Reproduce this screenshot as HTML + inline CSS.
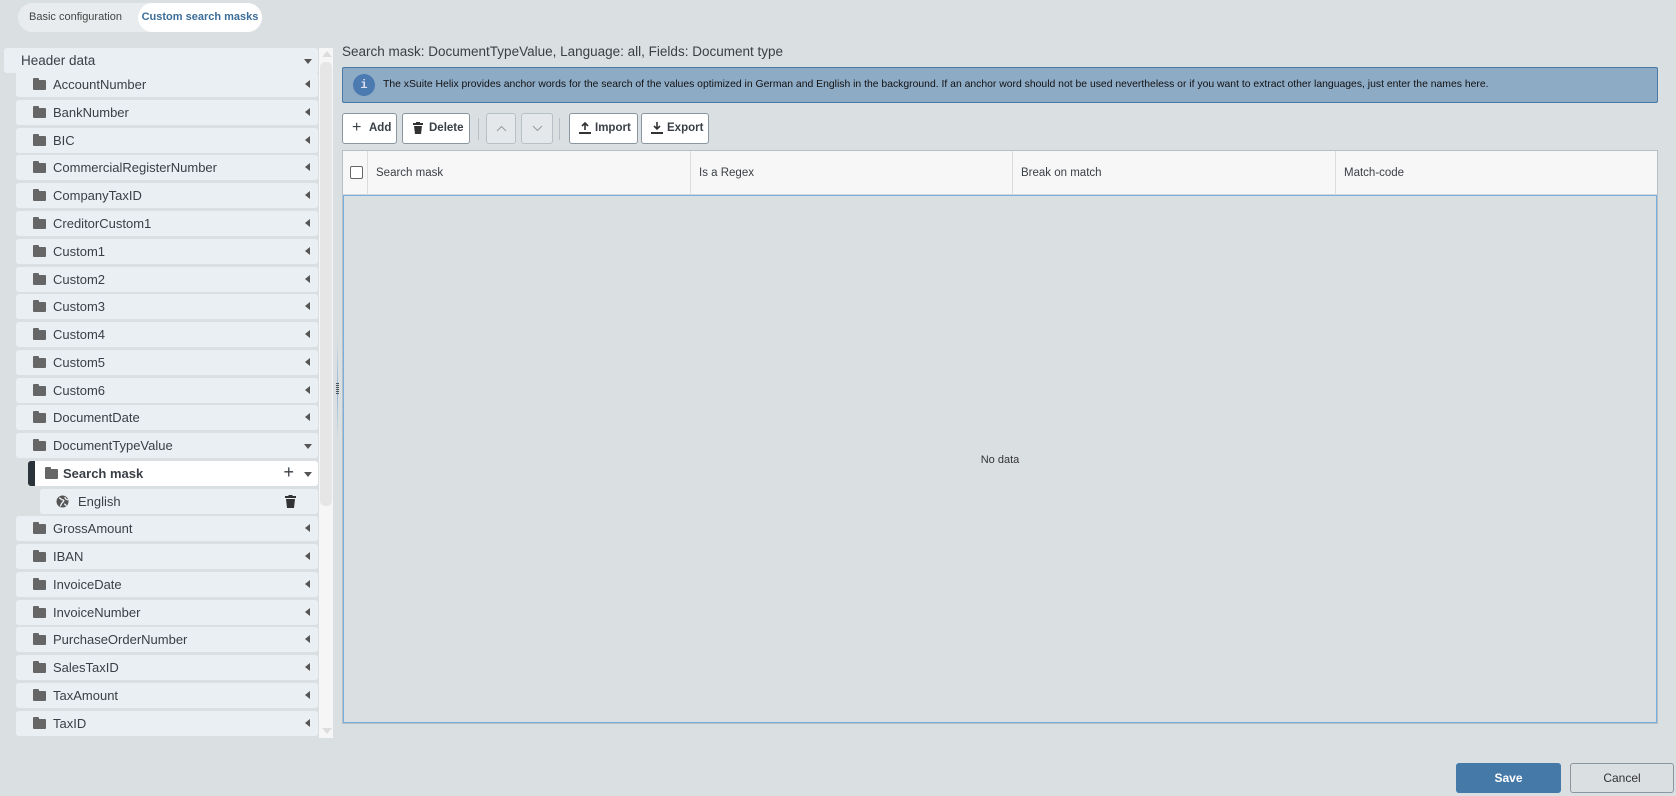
<!DOCTYPE html>
<html><head><meta charset="utf-8"><style>
*{box-sizing:border-box;margin:0;padding:0}
body{width:1676px;height:796px;background:#dadfe2;font-family:"Liberation Sans",sans-serif;position:relative;overflow:hidden;color:#333}
.abs{position:absolute}
.tabs{left:18px;top:3px;width:243px;height:29px;background:#e9ecee;border-radius:15px}
.tab{position:absolute;top:0;height:29px;line-height:29px;font-size:11px}
.row{position:absolute;left:16px;width:302px;height:25px;background:#eaeff3;border-radius:3px;font-size:13px;line-height:25px;color:#3a3f45}
.row .t{position:absolute;left:37px}
.fold{position:absolute;left:17px;top:8px;width:13px;height:10px;background:#666;border-radius:1px}
.fold:before{content:"";position:absolute;left:0;top:-2px;width:6px;height:3px;background:#666;border-radius:1px 1px 0 0}
.arr{position:absolute;right:8px;top:8px;width:0;height:0;border-top:4.5px solid transparent;border-bottom:4.5px solid transparent;border-right:5px solid #555}
.arrd{position:absolute;right:6px;top:11px;width:0;height:0;border-left:4.5px solid transparent;border-right:4.5px solid transparent;border-top:5px solid #555}
.btn{position:absolute;top:113px;height:31px;background:#fff;border:1px solid #8a96a0;border-radius:3px;font-size:11.5px;font-weight:bold;color:#3a3f45;line-height:29px}
.btn.dis{background:#e4e8eb;border-color:#b8c0c6}
.th{position:absolute;top:0;height:44px;line-height:44px;font-size:11.5px;color:#3a3f45;border-left:1px solid #dcdcdc;padding-left:8px}
</style></head><body>
<div class="abs tabs"><div class="tab" style="left:11px;color:#444">Basic configuration</div>
<div class="tab" style="left:120px;width:124px;background:#fff;border-radius:15px;text-align:center;font-weight:bold;color:#3d6d99">Custom search masks</div></div>

<div class="abs" style="left:319px;top:48px;width:14px;height:690px;background:#f6f6f6"></div>
<div class="abs" style="left:320px;top:62px;width:12px;height:444px;background:#e6e6e6;border-radius:5px"></div>
<div class="abs" style="left:322px;top:51px;border-left:5px solid transparent;border-right:5px solid transparent;border-bottom:6px solid #ddd"></div>
<div class="abs" style="left:322px;top:728px;border-left:5px solid transparent;border-right:5px solid transparent;border-top:6px solid #ddd"></div>
<div class="abs" style="left:337px;top:340px;width:1px;height:100px;background:linear-gradient(#dadfe2,#8fb3d8,#dadfe2)"></div>
<div class="abs" style="left:336px;top:383px;width:3px;height:11px;background:repeating-linear-gradient(#555 0 1px,transparent 1px 2px)"></div>

<div class="row" style="left:4px;width:314px;top:48px;font-size:13.5px"><span style="position:absolute;left:17px">Header data</span><div class="arrd"></div></div>

<div class="row" style="top:72px"><div class="fold"></div><span class="t">AccountNumber</span><div class="arr"></div></div>
<div class="row" style="top:100px"><div class="fold"></div><span class="t">BankNumber</span><div class="arr"></div></div>
<div class="row" style="top:128px"><div class="fold"></div><span class="t">BIC</span><div class="arr"></div></div>
<div class="row" style="top:155px"><div class="fold"></div><span class="t">CommercialRegisterNumber</span><div class="arr"></div></div>
<div class="row" style="top:183px"><div class="fold"></div><span class="t">CompanyTaxID</span><div class="arr"></div></div>
<div class="row" style="top:211px"><div class="fold"></div><span class="t">CreditorCustom1</span><div class="arr"></div></div>
<div class="row" style="top:239px"><div class="fold"></div><span class="t">Custom1</span><div class="arr"></div></div>
<div class="row" style="top:267px"><div class="fold"></div><span class="t">Custom2</span><div class="arr"></div></div>
<div class="row" style="top:294px"><div class="fold"></div><span class="t">Custom3</span><div class="arr"></div></div>
<div class="row" style="top:322px"><div class="fold"></div><span class="t">Custom4</span><div class="arr"></div></div>
<div class="row" style="top:350px"><div class="fold"></div><span class="t">Custom5</span><div class="arr"></div></div>
<div class="row" style="top:378px"><div class="fold"></div><span class="t">Custom6</span><div class="arr"></div></div>
<div class="row" style="top:405px"><div class="fold"></div><span class="t">DocumentDate</span><div class="arr"></div></div>
<div class="row" style="top:433px"><div class="fold"></div><span class="t">DocumentTypeValue</span><div class="arrd"></div></div>
<div class="row" style="top:461px;left:28px;width:290px;background:#fff;border-left:7px solid #2b333b"><div class="fold" style="left:10px"></div><span class="t" style="left:28px;font-weight:bold">Search mask</span><span style="position:absolute;right:24px;top:-1px;font-size:18px">+</span><div class="arrd"></div></div>
<div class="row" style="top:489px;left:40px;width:278px"><svg style="position:absolute;left:16px;top:6px" width="13" height="13" viewBox="0 0 13 13"><circle cx="6.5" cy="6.5" r="6" fill="#555"/><path d="M3 3c2 0 2 2 4 2s0 2-1 3-1 3-2 3M9 2c0 2 1 2 3 3M8 9c1 0 2 1 2 2" stroke="#eaeff3" stroke-width="1.3" fill="none"/></svg><span class="t" style="left:38px">English</span><svg style="position:absolute;right:22px;top:6px" width="11" height="13" viewBox="0 0 11 13"><rect x="0" y="1" width="11" height="2" fill="#333"/><rect x="3.5" y="0" width="4" height="1.5" fill="#333"/><path d="M1 4h9l-1 9H2z" fill="#333"/></svg></div>
<div class="row" style="top:516px"><div class="fold"></div><span class="t">GrossAmount</span><div class="arr"></div></div>
<div class="row" style="top:544px"><div class="fold"></div><span class="t">IBAN</span><div class="arr"></div></div>
<div class="row" style="top:572px"><div class="fold"></div><span class="t">InvoiceDate</span><div class="arr"></div></div>
<div class="row" style="top:600px"><div class="fold"></div><span class="t">InvoiceNumber</span><div class="arr"></div></div>
<div class="row" style="top:627px"><div class="fold"></div><span class="t">PurchaseOrderNumber</span><div class="arr"></div></div>
<div class="row" style="top:655px"><div class="fold"></div><span class="t">SalesTaxID</span><div class="arr"></div></div>
<div class="row" style="top:683px"><div class="fold"></div><span class="t">TaxAmount</span><div class="arr"></div></div>
<div class="row" style="top:711px"><div class="fold"></div><span class="t">TaxID</span><div class="arr"></div></div>

<div class="abs" style="left:342px;top:44px;font-size:13.5px;color:#3a3f45">Search mask: DocumentTypeValue, Language: all, Fields: Document type</div>
<div class="abs" style="left:342px;top:67px;width:1316px;height:36px;background:#8eabc6;border:1px solid #4a79a5;border-radius:2px">
<div class="abs" style="left:10px;top:6px;width:22px;height:22px;border-radius:50%;background:#4a7ab0;color:#dde;font-size:12px;font-weight:bold;text-align:center;line-height:22px;font-family:'Liberation Mono',monospace">i</div>
<div class="abs" style="left:40px;top:11px;font-size:10.4px;color:#111;white-space:nowrap">The xSuite Helix provides anchor words for the search of the values optimized in German and English in the background. If an anchor word should not be used nevertheless or if you want to extract other languages, just enter the names here.</div></div>

<div class="btn" style="left:342px;width:55px"><span style="position:absolute;left:9px;font-size:16px;font-weight:normal;top:-1px">+</span><span style="position:absolute;left:26px">Add</span></div>
<div class="btn" style="left:402px;width:68px"><svg style="position:absolute;left:10px;top:8px" width="10" height="12" viewBox="0 0 10 12"><rect y="1" width="10" height="2" fill="#333"/><rect x="3" width="4" height="1.5" fill="#333"/><path d="M1 4h8l-1 8H2z" fill="#333"/></svg><span style="position:absolute;left:26px">Delete</span></div>
<div class="abs" style="left:478px;top:118px;width:1px;height:22px;background:#b8c0c6"></div>
<div class="btn dis" style="left:486px;width:30px"><svg style="position:absolute;left:9px;top:11px" width="11" height="7"><path d="M1 6l4.5-4.5L10 6" stroke="#999" fill="none"/></svg></div>
<div class="btn dis" style="left:521px;width:32px"><svg style="position:absolute;left:10px;top:11px" width="11" height="7"><path d="M1 1l4.5 4.5L10 1" stroke="#999" fill="none"/></svg></div>
<div class="abs" style="left:559px;top:118px;width:1px;height:22px;background:#b8c0c6"></div>
<div class="btn" style="left:569px;width:69px"><svg style="position:absolute;left:9px;top:8px" width="12" height="12" viewBox="0 0 12 12"><path d="M6 1v7M3 4l3-3 3 3" stroke="#333" stroke-width="1.6" fill="none"/><rect x="0" y="10" width="12" height="2" fill="#333"/></svg><span style="position:absolute;left:25px">Import</span></div>
<div class="btn" style="left:641px;width:68px"><svg style="position:absolute;left:9px;top:8px" width="12" height="12" viewBox="0 0 12 12"><path d="M6 0v7M3 4l3 3 3-3" stroke="#333" stroke-width="1.6" fill="none"/><rect x="0" y="10" width="12" height="2" fill="#333"/></svg><span style="position:absolute;left:25px">Export</span></div>

<div class="abs" style="left:342px;top:150px;width:1316px;height:574px;border:1px solid #b8c0c6">
<div class="abs" style="left:0;top:0;width:1314px;height:44px;background:#f7f7f7;border-bottom:1px solid #d0d6da">
<div class="abs" style="left:7px;top:15px;width:13px;height:13px;border:1px solid #666;border-radius:2px;background:#fff"></div>
<div class="th" style="left:24px">Search mask</div>
<div class="th" style="left:347px">Is a Regex</div>
<div class="th" style="left:669px">Break on match</div>
<div class="th" style="left:992px">Match-code</div></div>
<div class="abs" style="left:0;top:44px;width:1314px;height:528px;border:1px solid #78aee0"></div>
<div class="abs" style="left:0;top:303px;width:1314px;text-align:center;font-size:11px;color:#333">No data</div></div>

<div class="abs" style="left:1456px;top:763px;width:105px;height:30px;background:#4579a8;border-radius:3px;color:#fff;font-weight:bold;font-size:12px;text-align:center;line-height:30px">Save</div>
<div class="abs" style="left:1570px;top:763px;width:104px;height:30px;border:1px solid #8a96a0;border-radius:3px;color:#333;font-size:12px;text-align:center;line-height:28px">Cancel</div>
</body></html>
